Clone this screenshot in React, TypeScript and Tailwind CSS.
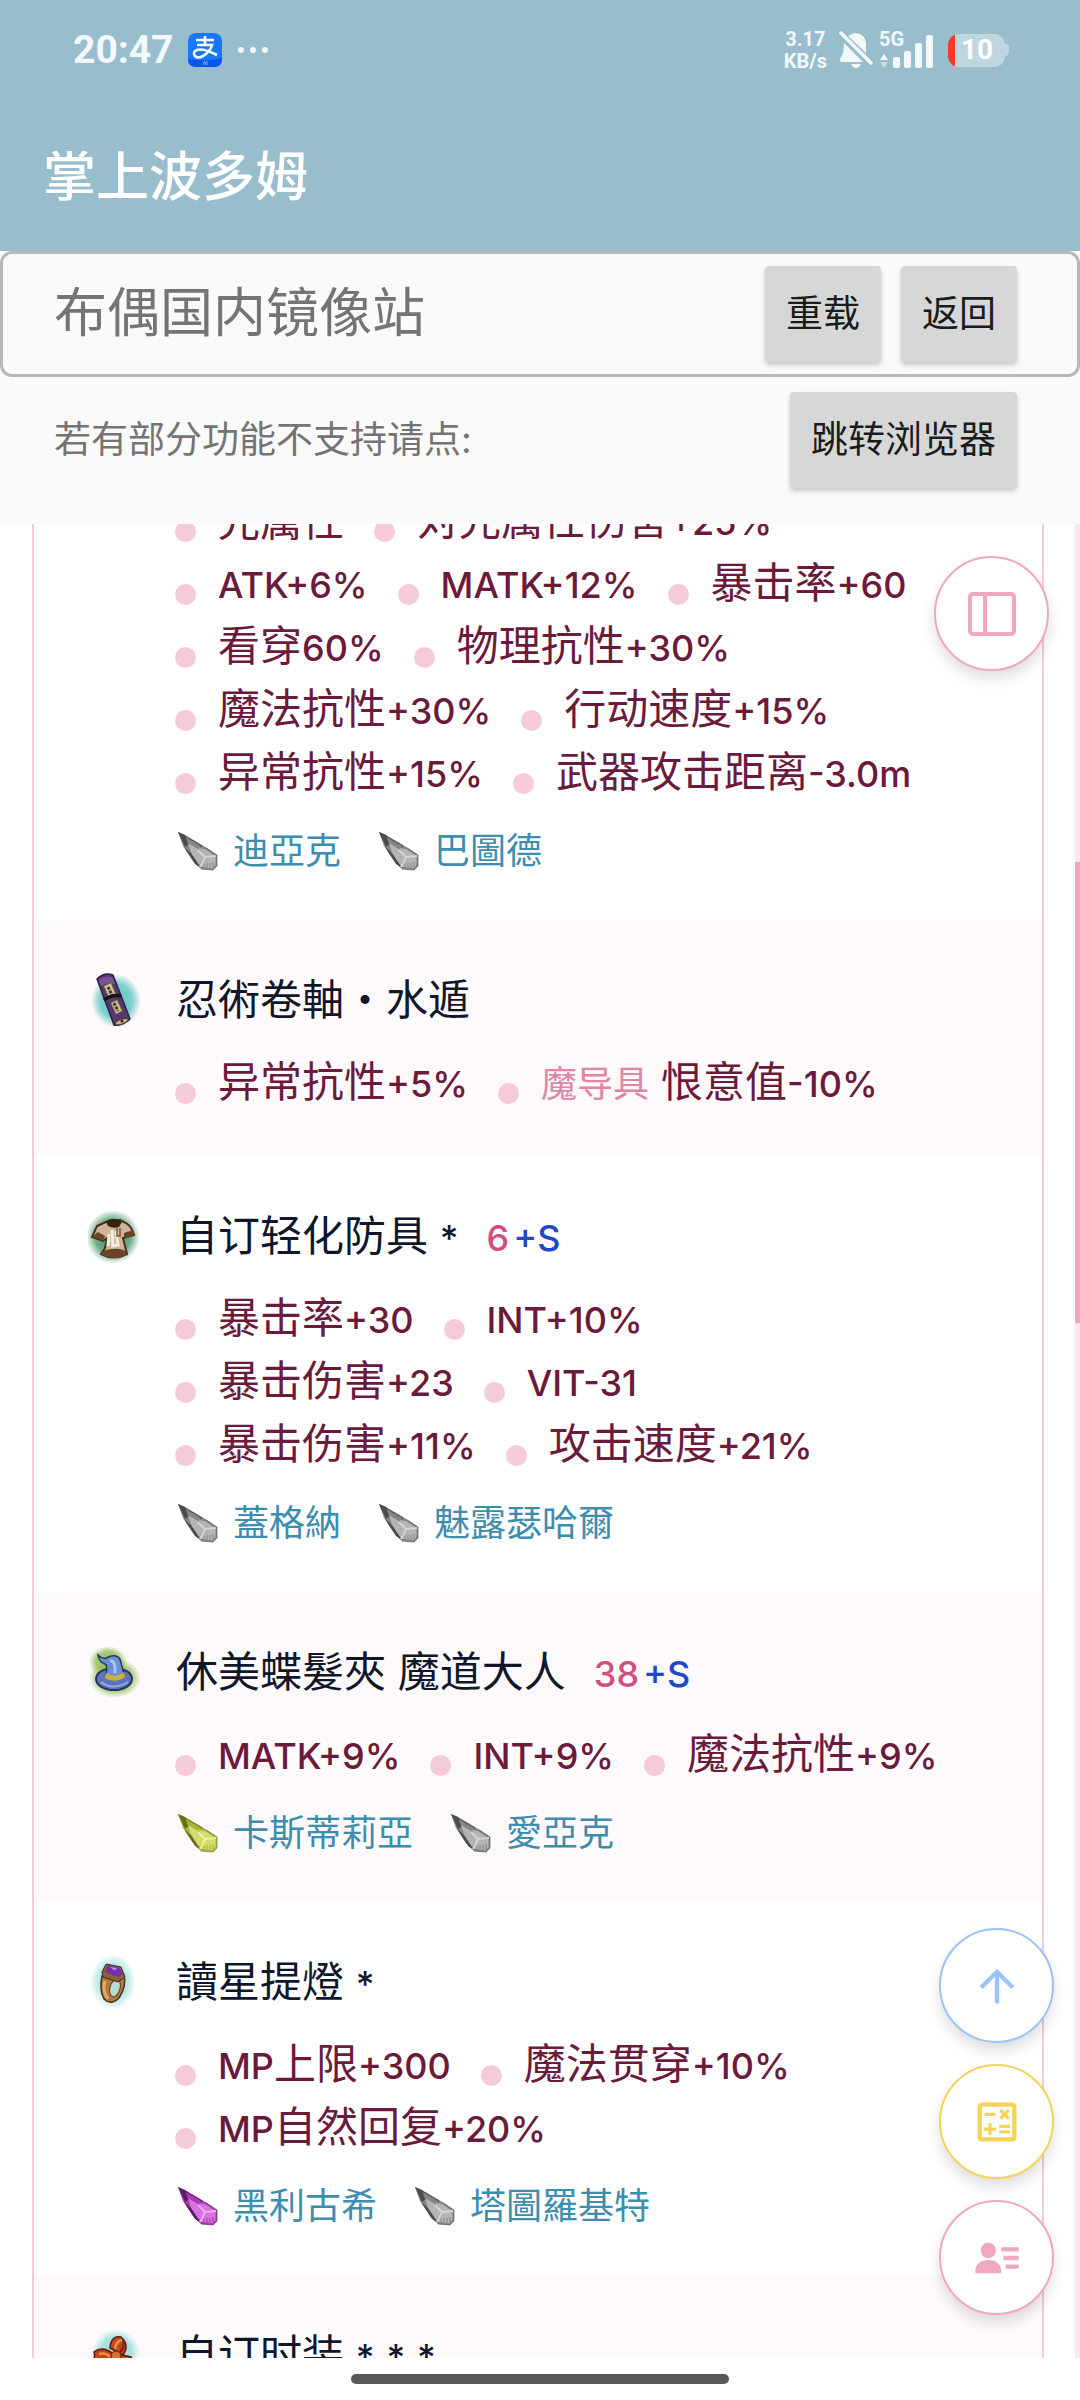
import React from 'react';
import { MdArrowUpward, MdOutlineCalculate } from 'react-icons/md';
import { BiSolidUserDetail } from 'react-icons/bi';

type Stat = { text: string; tag?: string };
type Stone = { name: string; color: 'gray' | 'yellow' | 'purple' };
type Equip = {
  name?: string;
  icon?: React.ReactNode;
  refine?: string;
  lines: Stat[][];
  stones?: Stone[];
};

const stoneColors = {
  gray: { dark: '#4c4c4c', mid: '#858585', light: '#b4b4b4', pale: '#d6d6d6' },
  yellow: { dark: '#66711f', mid: '#a9b23c', light: '#d3dc6c', pale: '#eef3a2' },
  purple: { dark: '#5d1c69', mid: '#a63bb4', light: '#d673de', pale: '#eeb0f0' },
};

// CJK keeps the parent size, latin letters and digits are a bit smaller
function Mixed({ text }: { text: string }) {
  return (
    <>
      {text.split(/([A-Za-z0-9+\-.%*]+)/).map((part, i) =>
        i % 2 ? <span key={i} className="text-[36px] font-medium">{part}</span> : part
      )}
    </>
  );
}

function StoneIcon({ color }: { color: Stone['color'] }) {
  const c = stoneColors[color];
  return (
    <svg width="44" height="40" viewBox="0 0 44 40" className="shrink-0">
      <path d="M3 1 L10 4 L32 17 L42 24 L42 35 L38 39 L26 38 L18 30 L8 15 Z" fill={c.mid} />
      <path d="M3 1 L10 4 L14 13 L10 16 Z" fill={c.dark} />
      <path d="M10 5 L27 15 L22 20 L12 12 Z" fill={c.mid} stroke={c.dark} strokeWidth="1" />
      <path d="M13 12 L23 18 L30 25 L24 34 L16 22 Z" fill={c.light} />
      <path d="M22 16 L31 18 L41 25 L30 26 Z" fill={c.light} stroke={c.mid} />
      <path d="M30 26 L41 25 L41 34 L37 38 L25 36 Z" fill={c.light} stroke={c.mid} />
      <path d="M16 22 L24 34 L27 38 L20 33 L9 16 Z" fill={c.dark} />
      <path d="M23 19 L30 26 L25 36 M30 26 L41 25" fill="none" stroke={c.pale} strokeWidth="2" />
      <path d="M29 33 v4 M32 32 v5 M35 32 v5 M38 31 v5" stroke={c.mid} strokeWidth="1" />
      <path d="M31 17 L42 24 V35 L38 39 L26 38" fill="none" stroke={c.dark} strokeWidth="1" opacity="0.6" />
    </svg>
  );
}

function Glow({ id, color }: { id: string; color: string }) {
  return (
    <defs>
      <radialGradient id={id}>
        <stop offset="0" stopColor={color} />
        <stop offset="0.65" stopColor={color} stopOpacity="0.75" />
        <stop offset="1" stopColor={color} stopOpacity="0" />
      </radialGradient>
    </defs>
  );
}

function ScrollIcon() {
  return (
    <svg width="52" height="56" viewBox="0 0 52 56">
      <Glow id="glow-scroll" color="#57c3bd" />
      <ellipse cx="28" cy="29" rx="25" ry="27" fill="url(#glow-scroll)" />
      <path d="M9 7 Q16 0 25 3 L42 47 Q35 54 26 53 Z" fill="#57376f" stroke="#2c2140" strokeWidth="1.5" />
      <path d="M11 8 Q17 3 24 5 L27 12 Q20 10 13 14 Z" fill="#7a529a" />
      <path d="M16 14 L23 11 L28 23 L21 26 Z M23 31 L29 28 L34 39 L28 42 Z" fill="#d8c98c" stroke="#8a7a45" />
      <path d="M20 15 l4 8 M26 31 l4 8" stroke="#3d3444" strokeWidth="3" strokeDasharray="3 1" />
      <path d="M16 28 Q24 22 33 24" fill="none" stroke="#15121c" strokeWidth="3.5" />
      <path d="M27 51 Q33 45 41 47 Q37 53 28 53 Z" fill="#c9ab8b" stroke="#4a3329" />
      <circle cx="34" cy="49" r="1.5" fill="#352018" />
    </svg>
  );
}

function ShirtIcon() {
  return (
    <svg width="52" height="56" viewBox="0 0 52 56">
      <Glow id="glow-shirt" color="#3f8e63" />
      <ellipse cx="25" cy="29" rx="27" ry="27" fill="url(#glow-shirt)" />
      <path d="M18 14 L9 18 L4 29 L15 33 L19 30 L17 40 L13 46 Q26 53 39 46 L35 30 L46 27 Q44 19 38 15 L32 12 Z" fill="#cdb69c" stroke="#4a2f1b" strokeWidth="2" />
      <path d="M18 13 Q27 8 34 14 L31 19 Q25 21 20 18 Z" fill="#38200f" />
      <path d="M5 28 L10 24 L17 28 L15 33 Z M36 25 L45 22 L46 27 L36 31 Z" fill="#6b4527" />
      <path d="M14 43 Q27 39 36 42 L39 46 Q27 54 13 46 Z" fill="#6b4527" />
      <path d="M21 26 L20 38 M24 22 L25 38 L30 37 L28 23" fill="none" stroke="#f5ebdf" strokeWidth="3" />
      <path d="M29 20 v8 h3 v-8" fill="none" stroke="#7d5632" strokeWidth="1.5" />
    </svg>
  );
}

function HatIcon() {
  return (
    <svg width="52" height="56" viewBox="0 0 52 56">
      <Glow id="glow-hat" color="#8fbb54" />
      <ellipse cx="27" cy="34" rx="26" ry="20" fill="url(#glow-hat)" />
      <ellipse cx="20" cy="18" rx="19" ry="16" fill="url(#glow-hat)" />
      <ellipse cx="26" cy="35" rx="18" ry="11" fill="#5d76bb" stroke="#273660" strokeWidth="2" />
      <path d="M10 11 Q14 15 18 14 Q28 9 32 15 L36 30 Q28 38 18 31 Q20 21 17 20 Q11 18 10 11 Z" fill="#6e8fd3" stroke="#273660" strokeWidth="1.5" />
      <path d="M22 17 Q26 16 27 23 L27 29" fill="none" stroke="#a8c3f0" strokeWidth="3" />
      <path d="M18 29 Q27 35 36 28 L37 33 Q27 40 17 34 Z" fill="#c9b23f" />
      <path d="M13 38 Q25 47 40 38" fill="none" stroke="#94aee4" strokeWidth="2" />
    </svg>
  );
}

function RingIcon() {
  return (
    <svg width="52" height="56" viewBox="0 0 52 56">
      <Glow id="glow-ring" color="#a5e2db" />
      <ellipse cx="25" cy="28" rx="23" ry="28" fill="url(#glow-ring)" />
      <path d="M14 22 Q11 36 16 45 Q23 52 31 44 Q39 32 36 21 Z" fill="#b0793f" stroke="#4d2e17" strokeWidth="1.5" />
      <ellipse cx="27" cy="34" rx="5" ry="9" transform="rotate(16 27 34)" fill="#b8dcd2" stroke="#5e3a1b" />
      <path d="M17 27 Q14 37 20 45" fill="none" stroke="#dfaa68" strokeWidth="3" />
      <path d="M18 10 L33 13 L37 23 L30 28 L15 23 L14 18 Z" fill="#8c6238" stroke="#42291a" />
      <path d="M20 11 L32 14 L35 20 L30 23 L17 18 Z" fill="#7a2bb0" />
      <path d="M22 13 L29 14 L27 17 Z" fill="#c182e8" />
    </svg>
  );
}

function BowIcon() {
  return (
    <svg width="52" height="56" viewBox="0 0 52 56">
      <Glow id="glow-bow" color="#8fdcd9" />
      <ellipse cx="28" cy="26" rx="24" ry="24" fill="url(#glow-bow)" />
      <path d="M22 21 Q23 8 33 10 Q42 18 35 28 Z" fill="#c9441f" stroke="#5d1d10" strokeWidth="1.5" />
      <path d="M26 27 Q14 18 6 25 Q8 32 2 38 Q14 46 27 34 Z" fill="#c6431f" stroke="#5d1d10" strokeWidth="1.5" />
      <path d="M29 27 L43 30 L48 40 L37 46 Z" fill="#c9441f" stroke="#5d1d10" strokeWidth="1.5" />
      <path d="M27 22 Q28 14 34 13 M11 27 Q18 25 22 30" fill="none" stroke="#e8933f" strokeWidth="2.5" />
      <path d="M32 25 Q37 20 35 14 M36 33 L42 38" fill="none" stroke="#7d2413" strokeWidth="2" />
      <circle cx="28" cy="29" r="5" fill="#d8702f" stroke="#5d1d10" />
    </svg>
  );
}

const equips: Equip[] = [
  {
    lines: [
      [{ text: '光属性' }, { text: '对光属性伤害+25%' }],
      [{ text: 'ATK+6%' }, { text: 'MATK+12%' }, { text: '暴击率+60' }],
      [{ text: '看穿60%' }, { text: '物理抗性+30%' }],
      [{ text: '魔法抗性+30%' }, { text: '行动速度+15%' }],
      [{ text: '异常抗性+15%' }, { text: '武器攻击距离-3.0m' }],
    ],
    stones: [{ name: '迪亞克', color: 'gray' }, { name: '巴圖德', color: 'gray' }],
  },
  {
    name: '忍術卷軸・水遁',
    icon: <ScrollIcon />,
    lines: [[{ text: '异常抗性+5%' }, { tag: '魔导具', text: '恨意值-10%' }]],
  },
  {
    name: '自订轻化防具 *',
    icon: <ShirtIcon />,
    refine: '6',
    lines: [
      [{ text: '暴击率+30' }, { text: 'INT+10%' }],
      [{ text: '暴击伤害+23' }, { text: 'VIT-31' }],
      [{ text: '暴击伤害+11%' }, { text: '攻击速度+21%' }],
    ],
    stones: [{ name: '蓋格納', color: 'gray' }, { name: '魅露瑟哈爾', color: 'gray' }],
  },
  {
    name: '休美蝶髮夾 魔道大人',
    icon: <HatIcon />,
    refine: '38',
    lines: [[{ text: 'MATK+9%' }, { text: 'INT+9%' }, { text: '魔法抗性+9%' }]],
    stones: [{ name: '卡斯蒂莉亞', color: 'yellow' }, { name: '愛亞克', color: 'gray' }],
  },
  {
    name: '讀星提燈 *',
    icon: <RingIcon />,
    lines: [
      [{ text: 'MP上限+300' }, { text: '魔法贯穿+10%' }],
      [{ text: 'MP自然回复+20%' }],
    ],
    stones: [{ name: '黑利古希', color: 'purple' }, { name: '塔圖羅基特', color: 'gray' }],
  },
  { name: '自订时装 * * *', icon: <BowIcon />, lines: [] },
];

function EquipRow({ equip }: { equip: Equip }) {
  return (
    <li className="pl-[54px] pb-[42px] even:bg-[#fef9fb]">
      {equip.name && (
        <div className="flex items-center gap-9 pt-12 mb-5">
          <div className="w-[52px] shrink-0">{equip.icon}</div>
          <h2 className="flex items-baseline gap-7 h-[63px] leading-[63px] text-[42px] text-[#10172b] whitespace-nowrap">
            <span><Mixed text={equip.name} /></span>
            {equip.refine && (
              <span className="flex gap-1 text-[36px] font-medium">
                <span className="text-[#d04f80]">{equip.refine}</span>
                <span className="text-[#2347c9]">+S</span>
              </span>
            )}
          </h2>
        </div>
      )}

      <div className="pl-[87px]">
        {equip.lines.map((line, i) => (
          <ul key={i} className="flex gap-[30px] h-[63px] leading-[63px] text-[42px] text-[#6b1a3c] whitespace-nowrap">
            {line.map((s) => (
              <li key={s.text} className="flex items-center gap-[22px]">
                <span className="size-[21px] mt-[22px] rounded-full bg-[#f5cbd9]" />
                <span>
                  {s.tag && <span className="mr-3 text-[36px] text-[#e283a8]">{s.tag}</span>}
                  <Mixed text={s.text} />
                </span>
              </li>
            ))}
          </ul>
        ))}

        {equip.stones && (
          <div className="flex gap-[35px] mt-5 h-[54px] text-[36px]">
            {equip.stones.map((s) => (
              <a key={s.name} href="#" className="flex items-center gap-[14px] text-[#3c8dae] whitespace-nowrap">
                <StoneIcon color={s.color} />
                {s.name}
              </a>
            ))}
          </div>
        )}
      </div>
    </li>
  );
}

function StatusBar() {
  return (
    <div className="flex items-center justify-between h-[100px] pl-[73px] pr-[71px] text-[#f3f9fb] font-[Roboto,sans-serif]">
      <div className="flex items-center">
        <span className="text-[39px] font-bold">20:47</span>
        <svg width="34" height="34" viewBox="0 0 34 34" className="ml-[14px]">
          <rect width="34" height="34" rx="8" fill="#1677ff" />
          <path d="M0 26 Q20 29 34 25 V26 Q34 34 26 34 H8 Q0 34 0 26 Z" fill="#0a55f0" />
          <path d="M17 3 V12 M8 7 H26 M9 12 H24 Q22 19 15 23 Q10 26 7 23 Q4 19 9 17 Q15 15 29 22" fill="none" stroke="#fff" strokeWidth="2.6" />
          <path d="M15 32 l1.5 -4 l1.5 4 M19 28 v4" fill="none" stroke="#9cc4ff" strokeWidth="0.8" />
        </svg>
        <svg width="32" height="6" viewBox="0 0 32 6" className="ml-4" fill="currentColor">
          <circle cx="3" cy="3" r="3" />
          <circle cx="15" cy="3" r="3" />
          <circle cx="27" cy="3" r="3" />
        </svg>
      </div>

      <div className="flex items-center">
        <div className="text-center text-[20px] leading-[22px] font-bold">
          <div>3.17</div>
          <div>KB/s</div>
        </div>
        <svg width="34" height="38" viewBox="0 0 34 38" className="ml-3" fill="currentColor">
          <path d="M9 5 Q13 2 17 2 Q26 3 27 12 V22 L9 5 Z" />
          <path d="M5 12 L24 31 H2 Q0 29 2 26 Q5 23 5 12 Z" />
          <path d="M12 33 H22 Q20 37 17 37 Q14 37 12 33 Z" />
          <path d="M2 2 L32 32" stroke="currentColor" strokeWidth="3.5" strokeLinecap="round" />
        </svg>
        <div className="relative ml-[6px]">
          <svg width="57" height="38" viewBox="0 0 57 38" fill="currentColor">
            <path d="M1 29 L5 23 L9 29 Z" />
            <path d="M1 31 L5 37 L9 31 Z" opacity="0.5" />
            <rect x="14" y="26" width="7" height="11" rx="2" />
            <rect x="25" y="20" width="7" height="17" rx="2" />
            <rect x="36" y="12" width="7" height="25" rx="2" />
            <rect x="47" y="4" width="7" height="33" rx="2" />
          </svg>
          <span className="absolute left-0 -top-1 text-[20px] leading-[24px] font-bold">5G</span>
        </div>
        <div className="flex items-center ml-3">
          <div className="flex items-center w-[57px] h-[33px] pl-[13px] rounded-[11px] bg-[linear-gradient(90deg,#f8372d_7px,#bfd6e0_7px)] text-[28px] font-bold text-white">
            10
          </div>
          <div className="w-1 h-3 rounded-r bg-[#bfd6e0]" />
        </div>
      </div>
    </div>
  );
}

const grayBtn = 'h-24 px-[21px] rounded-[4px] bg-[#d6d8d7] text-[37px] text-[#1b1b1b] shadow-[0_3px_5px_rgba(0,0,0,0.2)]';
const fab = 'flex items-center justify-center size-[115px] rounded-full bg-white border-2 shadow-[0_8px_14px_rgba(0,0,0,0.13)]';

export default function App() {
  return (
    <div className="flex flex-col h-screen overflow-hidden bg-white font-[Inter,'Noto_Sans_CJK_SC',sans-serif]">
      <header className="shrink-0 bg-[#98becd]">
        <StatusBar />
        <h1 className="flex items-center h-[151px] pt-1 pl-[43px] text-[53px] font-medium text-white">掌上波多姆</h1>
      </header>

      <section className="shrink-0 bg-[#fafafa]">
        <div className="flex items-center justify-between h-[126px] pl-[51px] pr-[60px] border-[3px] border-[#b9b9b9] rounded-xl">
          <span className="text-[53px] text-[#747474]">布偶国内镜像站</span>
          <div className="flex gap-5">
            <button className={grayBtn}>重载</button>
            <button className={grayBtn}>返回</button>
          </div>
        </div>
        <div className="flex items-start justify-between h-[147px] pt-[15px] pl-[54px] pr-[63px]">
          <span className="h-24 leading-[96px] text-[37px] text-[#747474]">若有部分功能不支持请点:</span>
          <button className={grayBtn}>跳转浏览器</button>
        </div>
      </section>

      <main className="relative flex flex-1 min-h-0 overflow-hidden">
        <ul className="flex-1 self-start -mt-[35px] ml-8 mr-[31px] border-x-2 border-[#f5cbd9]">
          {equips.map((e, i) => <EquipRow key={i} equip={e} />)}
        </ul>

        {/* scrollbar */}
        <div className="w-[5px] pt-[338px] bg-[#fce7ee]">
          <div className="h-[461px] bg-[#f3a5bf]" />
        </div>

        {/* floating buttons */}
        <button aria-label="侧栏" className={`${fab} absolute top-8 right-[31px] border-[#f0a8c1] text-[#f0a8c1]`}>
          <svg width="52" height="52" viewBox="0 0 52 52" fill="none" stroke="currentColor" strokeWidth="4">
            <rect x="4" y="6" width="44" height="40" rx="3" />
            <path d="M19 6 V46" />
          </svg>
        </button>
        <div className="absolute right-[26px] bottom-[43px] flex flex-col gap-[21px]">
          <button aria-label="回到顶部" className={`${fab} border-[#9cc3f7] text-[#9cc3f7]`}>
            <MdArrowUpward size={52} />
          </button>
          <button aria-label="计算器" className={`${fab} border-[#f3d35a] text-[#f3d35a]`}>
            <MdOutlineCalculate size={52} />
          </button>
          <button aria-label="角色" className={`${fab} border-[#f0a8c1] text-[#f0a8c1]`}>
            <BiSolidUserDetail size={52} />
          </button>
        </div>
      </main>

      <footer className="flex items-center justify-center h-[42px] shrink-0">
        <div className="w-[35%] h-[10px] rounded-full bg-[#585858]" />
      </footer>
    </div>
  );
}
